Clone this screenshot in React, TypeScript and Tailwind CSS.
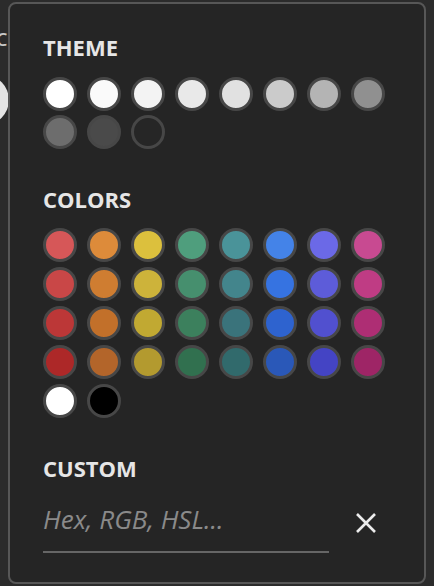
const themeSwatches = [
  "#ffffff",
  "#fafafa",
  "#f3f3f3",
  "#e9e9e9",
  "#e1e1e1",
  "#cbcbcb",
  "#b4b4b4",
  "#909090",
  "#6d6d6d",
  "#4a4a4a",
  "#262626",
];

const colorSwatches = [
  // row 1
  "#d65758", "#dd8b3a", "#dcc03d", "#4f9e7d", "#4a9399", "#4483e8", "#6b69e7", "#c84a91",
  // row 2
  "#c94747", "#cf7d31", "#cdb33a", "#468f6e", "#43858c", "#3673e1", "#5d5cd9", "#bf3c84",
  // row 3
  "#bc3737", "#c2702a", "#c1a932", "#3c805d", "#3a737b", "#2e63cf", "#5150cf", "#ae2e74",
  // row 4
  "#ad2828", "#b3652a", "#b39a2f", "#31704f", "#316a6c", "#2a58b8", "#4444c4", "#9e2566",
  // row 5
  "#ffffff", "#000000",
];

function Swatch({ color }: { color: string }) {
  return (
    <button
      className="w-[34px] h-[34px] rounded-full border-[3px] border-[#474747]"
      style={{ backgroundColor: color }}
    />
  );
}

function Heading({ children }: { children: string }) {
  return (
    <h2 className="text-[22px] leading-[28px] font-bold text-[#e6e6e6]">{children}</h2>
  );
}

export default function App() {
  return (
    <div
      className="relative w-[434px] h-[586px] overflow-hidden bg-[#2b2b2b]"
      style={{ fontFamily: '"Open Sans", "Noto Sans", sans-serif' }}
    >
      {/* content behind the popover */}
      <span className="absolute left-[-4px] top-[27px] text-[18px] leading-[24px] font-semibold text-[#c8c8c8]">
        C
      </span>
      <div className="absolute left-[-41px] top-[75px] w-[50px] h-[50px] rounded-full bg-[#e4e4e4]" />

      {/* popover */}
      <div className="absolute left-[8px] top-[2px] w-[418px] h-[582px] rounded-[8px] border-2 border-[#575757] bg-[#252525] pl-[33px] pt-[29px]">
        <Heading>THEME</Heading>
        <div className="mt-[16px] grid grid-cols-[repeat(8,34px)] gap-x-[10px] gap-y-[4px]">
          {themeSwatches.map((c, i) => (
            <Swatch key={i} color={c} />
          ))}
        </div>

        <div className="mt-[36px]">
          <Heading>COLORS</Heading>
        </div>
        <div className="mt-[15px] grid grid-cols-[repeat(8,34px)] gap-x-[10px] gap-y-[5px]">
          {colorSwatches.map((c, i) => (
            <Swatch key={i} color={c} />
          ))}
        </div>

        <div className="mt-[36px]">
          <Heading>CUSTOM</Heading>
        </div>
        <div className="mt-[20px] flex items-start">
          <div className="w-[286px] border-b-2 border-[#666666] pb-[15px]">
            <input
              className="block w-full bg-transparent outline-none text-[26px] leading-[34px] italic text-[#e6e6e6] placeholder:text-[#8a8a8a]"
              placeholder="Hex, RGB, HSL..."
            />
          </div>
          <button className="ml-[26px] mt-[10px]">
            <svg width="22" height="22" viewBox="0 0 22 22" className="block">
              <path d="M2 2 L20 20 M20 2 L2 20" stroke="#ececec" strokeWidth="2.6" />
            </svg>
          </button>
        </div>
      </div>
    </div>
  );
}
